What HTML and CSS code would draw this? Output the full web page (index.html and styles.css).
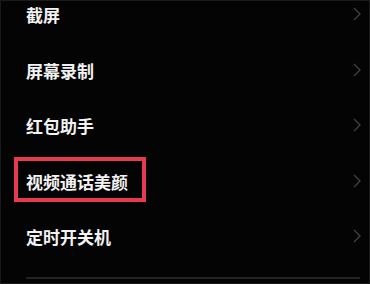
FILE: index.html
```html
<!DOCTYPE html>
<html lang="zh-CN">
<head>
<meta charset="utf-8">
<link rel="stylesheet" href="styles.css">
</head>
<body>
<div class="frame">
  <ul class="list">
    <li class="row"><span class="label">截屏</span><svg class="chev" viewBox="0 0 8 14"><path d="M1 1 L7 7 L1 13" /></svg></li>
    <li class="row"><span class="label">屏幕录制</span><svg class="chev" viewBox="0 0 8 14"><path d="M1 1 L7 7 L1 13" /></svg></li>
    <li class="row"><span class="label">红包助手</span><svg class="chev" viewBox="0 0 8 14"><path d="M1 1 L7 7 L1 13" /></svg></li>
    <li class="row highlighted"><span class="label">视频通话美颜</span><svg class="chev" viewBox="0 0 8 14"><path d="M1 1 L7 7 L1 13" /></svg></li>
    <li class="row"><span class="label">定时开关机</span><svg class="chev" viewBox="0 0 8 14"><path d="M1 1 L7 7 L1 13" /></svg></li>
  </ul>
  <div class="divider"></div>
</div>
</body>
</html>
```

FILE: styles.css
```css
html, body {
  margin: 0;
  padding: 0;
  background: #050505;
}
.frame {
  width: 370px;
  height: 284px;
  box-sizing: border-box;
  border: 1px solid #1a1a1a;
  background: #040404;
  overflow: hidden;
  font-family: "Noto Sans CJK SC", "Noto Sans", sans-serif;
}
.list {
  list-style: none;
  margin: -14px 0 0 0;
  padding: 0;
}
.row {
  position: relative;
  height: 55.5px;
  display: flex;
  align-items: center;
  justify-content: space-between;
  padding: 0 8px 0 25px;
}
.label {
  color: #f2f2f2;
  font-size: 17px;
  font-weight: 700;
  line-height: 1;
  letter-spacing: 0;
}
.chev {
  width: 8px;
  height: 14px;
  fill: none;
  stroke: #424242;
  stroke-width: 1.3;
  margin-top: -1px;
}
.highlighted::before {
  content: "";
  position: absolute;
  left: 13px;
  top: 3px;
  width: 124px;
  height: 37px;
  border: 4px solid #e73a4e;
}
.divider {
  height: 2px;
  background: #232323;
  margin: 12px 9px 0 25px;
}
```
